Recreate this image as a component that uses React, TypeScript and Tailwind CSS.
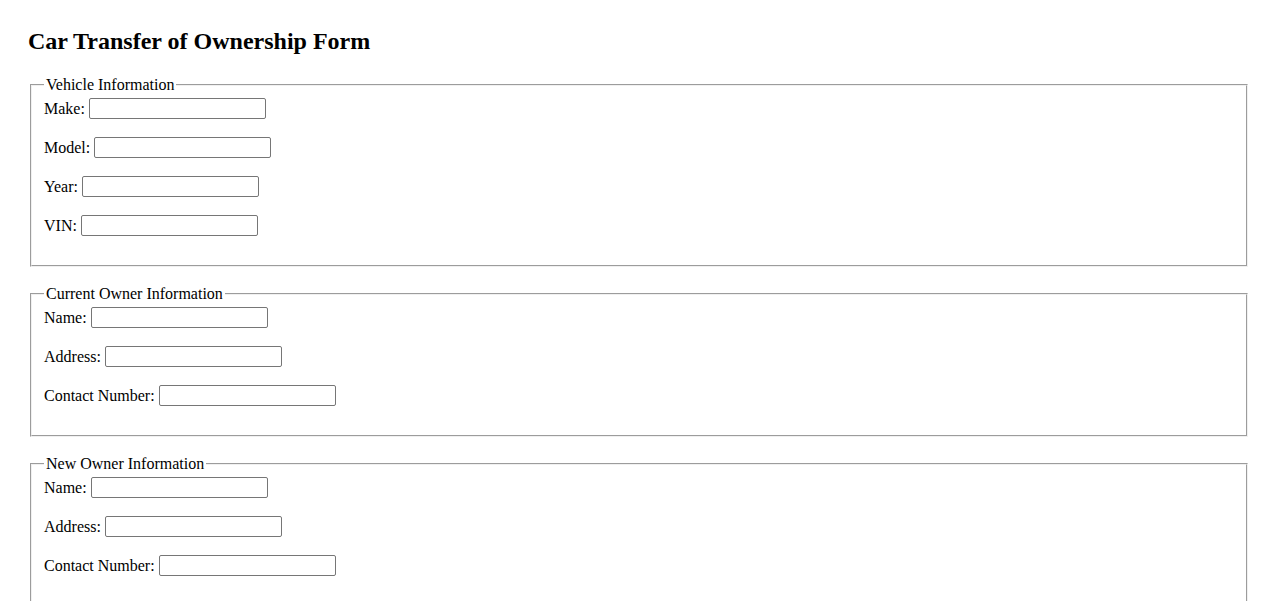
import React from "react";

type Field = { label: string; name: string };

const sections: { title: string; fields: Field[] }[] = [
  {
    title: "Vehicle Information",
    fields: [
      { label: "Make:", name: "make" },
      { label: "Model:", name: "model" },
      { label: "Year:", name: "year" },
      { label: "VIN:", name: "vin" },
    ],
  },
  {
    title: "Current Owner Information",
    fields: [
      { label: "Name:", name: "currentName" },
      { label: "Address:", name: "currentAddress" },
      { label: "Contact Number:", name: "currentContact" },
    ],
  },
  {
    title: "New Owner Information",
    fields: [
      { label: "Name:", name: "newName" },
      { label: "Address:", name: "newAddress" },
      { label: "Contact Number:", name: "newContact" },
    ],
  },
];

const App = () => {
  return (
    <div className="min-h-screen bg-white px-[28px] pt-[27px] pb-[20px] font-['Liberation_Serif','Times_New_Roman',serif] text-[16px] text-black">
      <h2 className="mb-[21px] text-[24px] font-bold leading-[28px]">
        Car Transfer of Ownership Form
      </h2>

      <form className="flex flex-col gap-[18px]">
        {sections.map((section) => (
          <fieldset
            key={section.title}
            className="mx-[2px] border-2 border-[#f0f0f0] [border-style:groove] px-[12px] pt-[4px] pb-[28.5px]"
          >
            <legend className="px-[2px] leading-[18.4px]">{section.title}</legend>
            {/* Rows */}
            <div className="flex flex-col gap-[18px]">
              {section.fields.map((field) => (
                <div key={field.name} className="flex h-[21px] items-center gap-[4px]">
                  <label htmlFor={field.name} className="leading-[18px]">
                    {field.label}
                  </label>
                  <input
                    id={field.name}
                    type="text"
                    className="h-[21px] w-[177px] rounded-[2px] border border-[#767676] bg-white px-[2px] text-[13.33px] focus:outline-0"
                  />
                </div>
              ))}
            </div>
          </fieldset>
        ))}
      </form>
    </div>
  );
};

export default App;
